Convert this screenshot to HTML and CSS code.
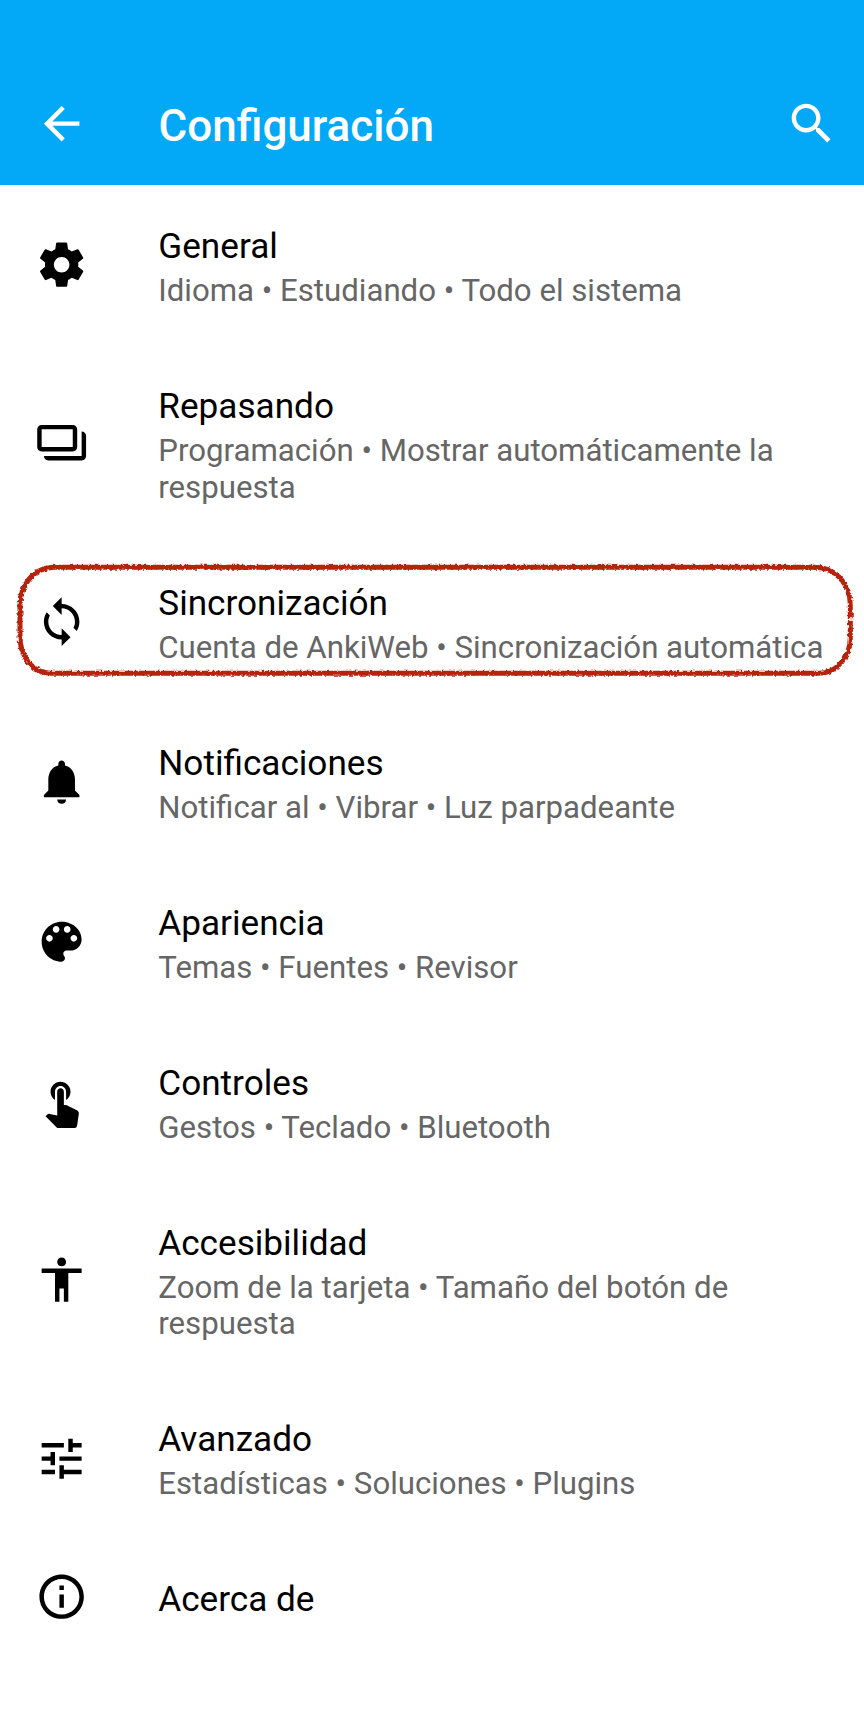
FILE: index.html
```html
<!DOCTYPE html>
<html lang="es">
<head>
<meta charset="utf-8">
<title>Configuración</title>
<link rel="stylesheet" href="styles.css">
</head>
<body>
<header class="appbar">
  <svg class="icon" viewBox="0 0 24 24"><path d="M20 11H7.83l5.59-5.59L12 4l-8 8 8 8 1.41-1.41L7.83 13H20v-2z"/></svg>
  <h1 class="appbar-title">Configuración</h1>
  <svg class="icon" viewBox="0 0 24 24"><path d="M15.5 14h-.79l-.28-.27C15.41 12.59 16 11.11 16 9.5 16 5.91 13.09 3 9.5 3S3 5.91 3 9.5 5.91 16 9.5 16c1.61 0 3.09-.59 4.23-1.57l.27.28v.79l5 4.99L20.49 19l-4.99-5zm-6 0C7.01 14 5 11.99 5 9.5S7.01 5 9.5 5 14 7.01 14 9.5 11.99 14 9.5 14z"/></svg>
</header>
<main class="list">
  <section class="row">
    <svg class="icon" viewBox="0 0 24 24"><path d="M19.43 12.98c.04-.32.07-.64.07-.98s-.03-.66-.07-.98l2.11-1.65c.19-.15.24-.42.12-.64l-2-3.46c-.12-.22-.39-.3-.61-.22l-2.49 1c-.52-.4-1.08-.73-1.69-.98l-.38-2.65C14.46 2.18 14.25 2 14 2h-4c-.25 0-.46.18-.49.42l-.38 2.65c-.61.25-1.17.59-1.69.98l-2.49-1c-.23-.09-.49 0-.61.22l-2 3.46c-.13.22-.07.49.12.64l2.11 1.65c-.04.32-.07.65-.07.98s.03.66.07.98l-2.11 1.65c-.19.15-.24.42-.12.64l2 3.46c.12.22.39.3.61.22l2.49-1c.52.4 1.08.73 1.69.98l.38 2.65c.03.24.24.42.49.42h4c.25 0 .46-.18.49-.42l.38-2.65c.61-.25 1.17-.59 1.69-.98l2.49 1c.23.09.49 0 .61-.22l2-3.46c.12-.22.07-.49-.12-.64l-2.11-1.65zM12 15.5c-1.93 0-3.5-1.57-3.5-3.5s1.57-3.5 3.5-3.5 3.5 1.57 3.5 3.5-1.57 3.5-3.5 3.5z"/></svg>
    <div class="text"><h2 class="title">General</h2><p class="summary">Idioma • Estudiando • Todo el sistema</p></div>
  </section>
  <section class="row">
    <svg class="icon" viewBox="0 0 24 24"><path fill-rule="evenodd" d="M3 4h14c1.1 0 2 .9 2 2v8c0 1.1-.9 2-2 2H3c-1.1 0-2-.9-2-2V6c0-1.1.9-2 2-2zm0 2v8h14V6z"/><path d="M4 18h17V7c1.1 0 2 .9 2 2v9c0 1.1-.9 2-2 2H6c-1.1 0-2-.9-2-2z"/></svg>
    <div class="text"><h2 class="title">Repasando</h2><p class="summary">Programación • Mostrar automáticamente la respuesta</p></div>
  </section>
  <section class="row">
    <svg class="icon" viewBox="0 0 24 24"><path d="M12 4V1L8 5l4 4V6c3.31 0 6 2.69 6 6 0 1.01-.25 1.97-.7 2.8l1.46 1.46C19.54 15.03 20 13.57 20 12c0-4.42-3.58-8-8-8zm0 14c-3.31 0-6-2.69-6-6 0-1.01.25-1.97.7-2.8L5.24 7.74C4.46 8.97 4 10.43 4 12c0 4.42 3.58 8 8 8v3l4-4-4-4v3z"/></svg>
    <div class="text"><h2 class="title">Sincronización</h2><p class="summary">Cuenta de AnkiWeb • Sincronización automática</p></div>
    <svg class="marker" viewBox="0 0 864 160">
      <defs>
        <filter id="crayon" filterUnits="userSpaceOnUse" x="0" y="0" width="864" height="160">
          <feTurbulence type="fractalNoise" baseFrequency="0.4" numOctaves="2" seed="4" result="noise"/>
          <feDisplacementMap in="SourceGraphic" in2="noise" scale="4" xChannelSelector="R" yChannelSelector="G"/>
        </filter>
      </defs>
      <path filter="url(#crayon)" d="M850.3 77.2V64C850.3 44 836 26.3 815 26.3H55C32 26.3 20 46 20 64V95C20 114 31 132.3 51 132.3H819C838 132.3 850.3 114 850.3 97V79.8"/>
    </svg>
  </section>
  <section class="row">
    <svg class="icon" viewBox="0 0 24 24"><path d="M12 22c1.1 0 2-.9 2-2h-4c0 1.1.89 2 2 2zm6-6v-5c0-3.07-1.64-5.64-4.5-6.32V4c0-.83-.67-1.5-1.5-1.5s-1.5.67-1.5 1.5v.68C7.63 5.36 6 7.92 6 11v5l-2 2v1h16v-1l-2-2z"/></svg>
    <div class="text"><h2 class="title">Notificaciones</h2><p class="summary">Notificar al • Vibrar • Luz parpadeante</p></div>
  </section>
  <section class="row">
    <svg class="icon" viewBox="0 0 24 24"><path d="M12 3c-4.97 0-9 4.03-9 9s4.03 9 9 9c.83 0 1.5-.67 1.5-1.5 0-.39-.15-.74-.39-1.01-.23-.26-.38-.61-.38-.99 0-.83.67-1.5 1.5-1.5H16c2.76 0 5-2.24 5-5 0-4.42-4.03-8-9-8zm-5.5 9c-.83 0-1.5-.67-1.5-1.5S5.67 9 6.5 9 8 9.67 8 10.5 7.33 12 6.5 12zm3-4C8.67 8 8 7.33 8 6.5S8.67 5 9.5 5s1.5.67 1.5 1.5S10.33 8 9.5 8zm5 0c-.83 0-1.5-.67-1.5-1.5S13.67 5 14.5 5s1.5.67 1.5 1.5S15.33 8 14.5 8zm3 4c-.83 0-1.5-.67-1.5-1.5S16.67 9 17.5 9s1.5.67 1.5 1.5-.67 1.5-1.5 1.5z"/></svg>
    <div class="text"><h2 class="title">Apariencia</h2><p class="summary">Temas • Fuentes • Revisor</p></div>
  </section>
  <section class="row">
    <svg class="icon" viewBox="0 0 24 24"><path d="M9 11.24V7.5C9 6.12 10.12 5 11.5 5S14 6.12 14 7.5v3.74c1.21-.81 2-2.18 2-3.74C16 5.01 13.99 3 11.5 3S7 5.01 7 7.5c0 1.56.79 2.93 2 3.74zm9.84 4.63l-4.54-2.26c-.17-.07-.35-.11-.54-.11H13v-6c0-.83-.67-1.5-1.5-1.5S10 6.67 10 7.5v10.74l-3.43-.72c-.08-.01-.15-.03-.24-.03-.31 0-.59.13-.79.33l-.79.8 4.94 4.94c.27.27.65.44 1.06.44h6.79c.75 0 1.33-.55 1.44-1.28l.75-5.27c.01-.07.02-.14.02-.2 0-.62-.38-1.16-.91-1.38z"/></svg>
    <div class="text"><h2 class="title">Controles</h2><p class="summary">Gestos • Teclado • Bluetooth</p></div>
  </section>
  <section class="row">
    <svg class="icon" viewBox="0 0 24 24"><path d="M12 2c1.1 0 2 .9 2 2s-.9 2-2 2-2-.9-2-2 .9-2 2-2zm9 7h-6v13h-2v-6h-2v6H9V9H3V7h18v2z"/></svg>
    <div class="text"><h2 class="title">Accesibilidad</h2><p class="summary">Zoom de la tarjeta • Tamaño del botón de respuesta</p></div>
  </section>
  <section class="row">
    <svg class="icon" viewBox="0 0 24 24"><path d="M3 17v2h6v-2H3M3 5v2h10V5H3M13 21v-2h8v-2h-8v-2h-2v6h2M7 9v2H3v2h4v2h2V9H7M21 13v-2H11v2h10M15 9h2V7h4V5h-4V3h-2v6z"/></svg>
    <div class="text"><h2 class="title">Avanzado</h2><p class="summary">Estadísticas • Soluciones • Plugins</p></div>
  </section>
  <section class="row">
    <svg class="icon" viewBox="0 0 24 24"><path d="M11 7h2v2h-2zm0 4h2v6h-2zm1-9C6.48 2 2 6.48 2 12s4.48 10 10 10 10-4.48 10-10S17.52 2 12 2zm0 18c-4.41 0-8-3.59-8-8s3.59-8 8-8 8 3.59 8 8-3.59 8-8 8z"/></svg>
    <div class="text"><h2 class="title">Acerca de</h2></div>
  </section>
</main>
</body>
</html>
```
FILE: styles.css
```css
* { box-sizing: border-box; margin: 0; padding: 0; }
body {
  width: 864px;
  height: 1728px;
  overflow: hidden;
  background: #fff;
  font-family: Roboto, sans-serif;
}
.icon { flex: none; width: 53.3px; height: 53.3px; fill: #000; }
.appbar {
  display: flex;
  align-items: center;
  height: 184.7px;
  padding: 62px 26.2px 0 35px;
  background: #03a9f6;
}
.appbar .icon { fill: #fff; }
.appbar-title {
  flex: 1;
  margin: 6px 0 0 70.2px;
  color: #fff;
  font-size: 44px;
  font-weight: 500;
  line-height: 52px;
}
.row {
  position: relative;
  display: flex;
  align-items: center;
  padding-left: 35px;
}
.text {
  flex: 1;
  margin-left: 70px;
  padding: 40.2px 35px 35px 0;
}
.title { color: #000; font-size: 35.15px; font-weight: 400; line-height: 42px; }
.summary { margin-top: 6px; color: #666; font-size: 31.2px; line-height: 36.8px; }
.marker {
  position: absolute;
  left: 0;
  top: 0;
  width: 864px;
  height: 160px;
  fill: none;
  stroke: #b7200c;
  stroke-width: 5;
}
```
